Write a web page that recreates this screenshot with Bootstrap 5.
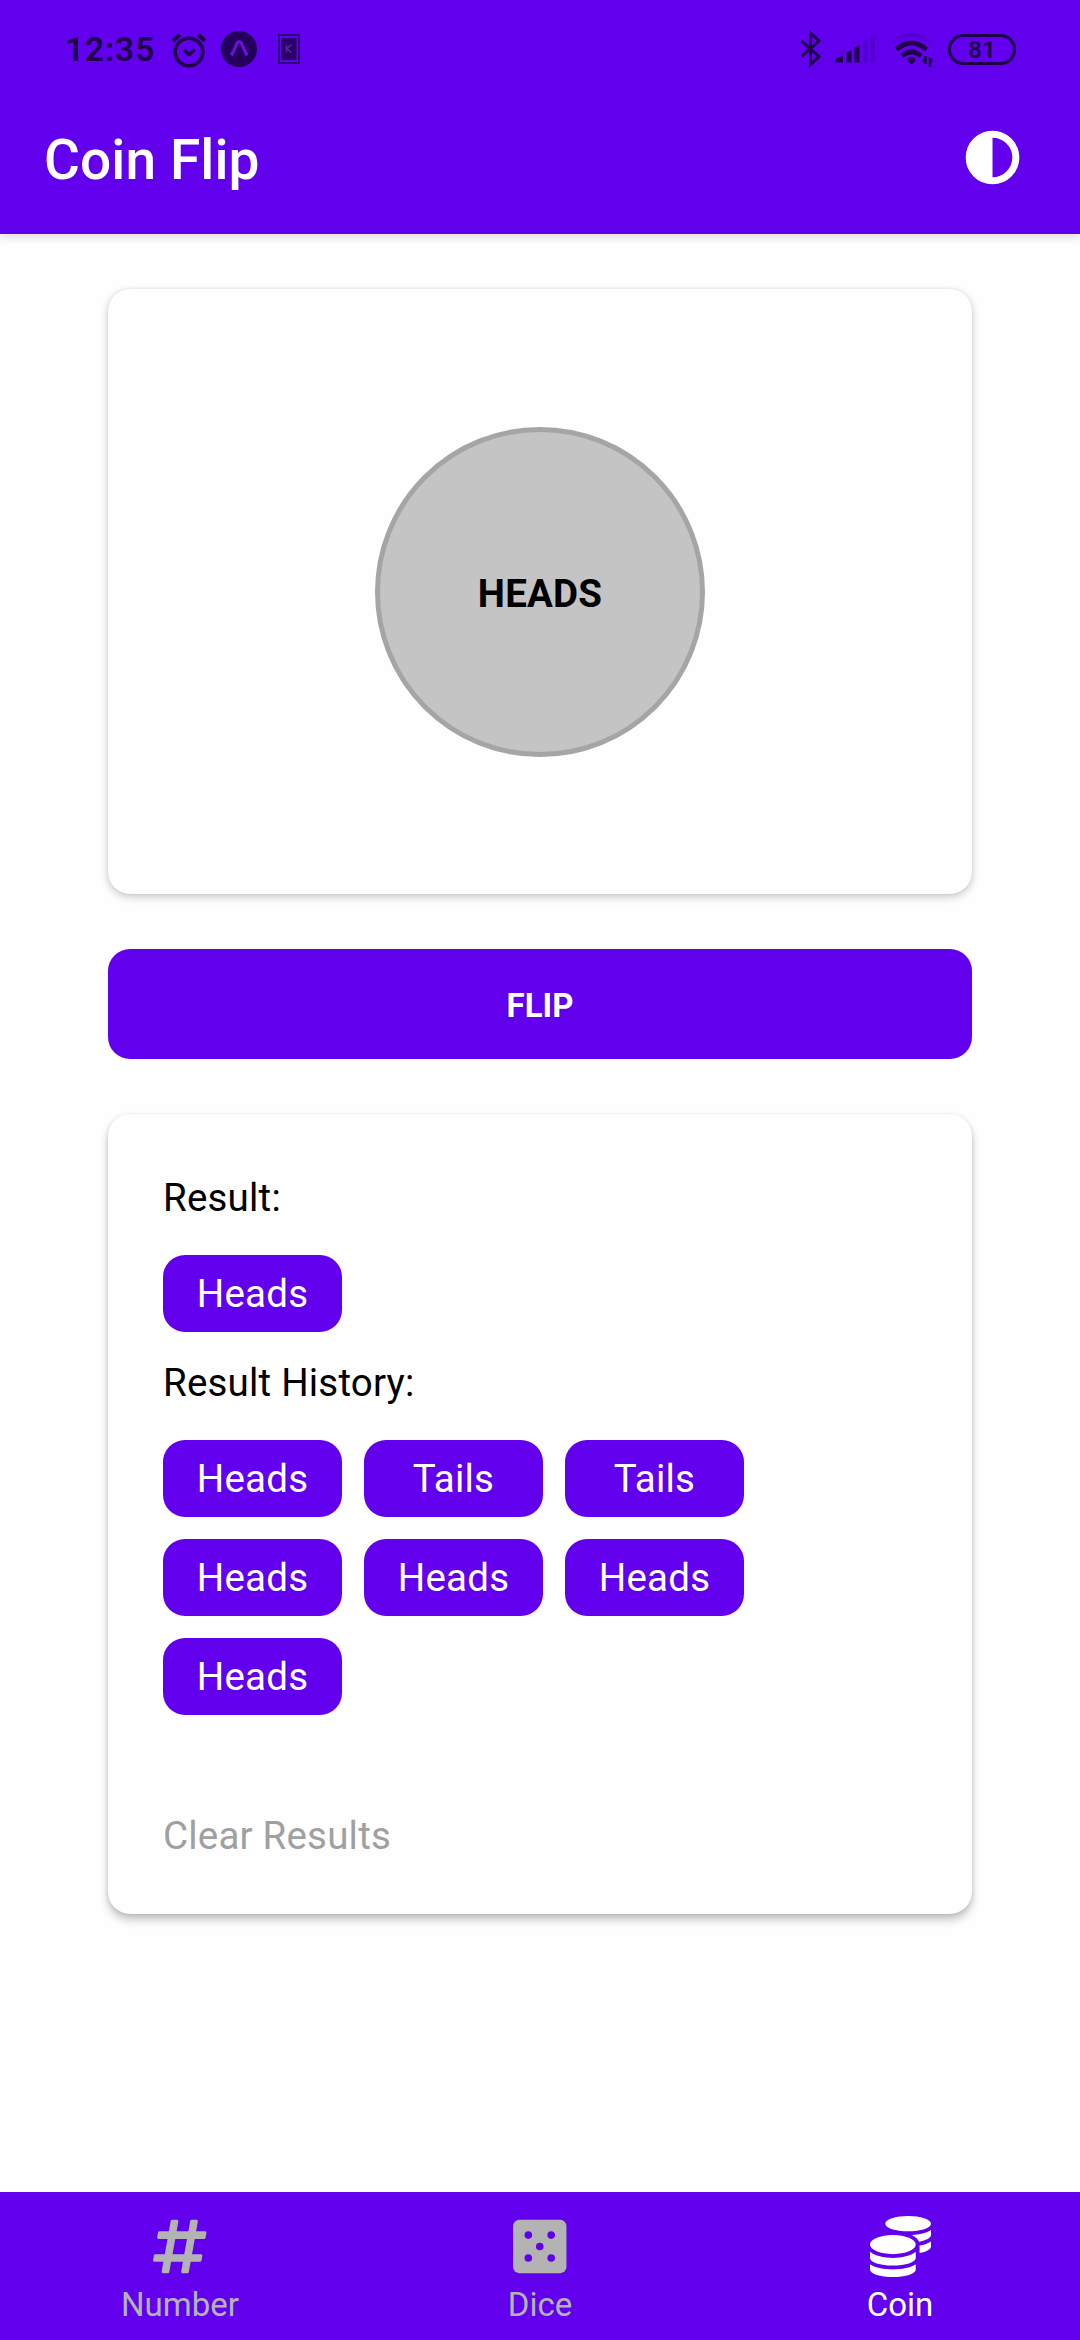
<!DOCTYPE html>
<html lang="en">
<head>
<meta charset="utf-8">
<meta name="viewport" content="width=device-width, initial-scale=1">
<title>Coin Flip</title>
<link href="https://cdn.jsdelivr.net/npm/bootstrap@5.3.0/dist/css/bootstrap.min.css" rel="stylesheet">
<style>
  :root { --brand: #6200ee; --ink: #1d0048; }
  body { font-family: Roboto, "Noto Sans", sans-serif; font-size: 38.5px; line-height: 52px; color: #000; background: #fefefe; }
  .screen { width: 1080px; height: 2340px; overflow: hidden; }
  svg { display: block; flex: none; }
  .bg-brand { background: var(--brand); }
  .app-header { height: 234px; box-shadow: 0 3px 9px rgba(0,0,0,.14); }
  .status-bar { height: 98px; padding: 0 64px 0 65px; color: var(--ink); }
  .clock { font-size: 33.5px; font-weight: 600; letter-spacing: .9px; line-height: 40px; width: 106px; padding-top: 2px; }
  .battery { width: 68px; height: 31px; border: 3px solid; border-radius: 16px; font-size: 24px; font-weight: 600; line-height: 25px; padding-top: 2px; }
  .title-bar { height: 123px; padding: 0 60px 0 44px; }
  .title-bar h1 { font-size: 55px; font-weight: 500; line-height: 64px; letter-spacing: .1px; }
  .content { width: 864px; padding-top: 55px; gap: 55px; }
  .panel { --bs-card-border-width: 0; --bs-card-border-radius: 22px; --bs-card-bg: #fefefe; box-shadow: 0 3px 9px rgba(0,0,0,.21), 0 0 3px rgba(0,0,0,.09); }
  .coin-panel { height: 605px; }
  .coin-face { width: 330px; height: 330px; border: 5.5px solid #a5a5a5; background: #c4c4c4; padding-top: 5px; letter-spacing: .2px; }
  .btn-flip { --bs-btn-color: #fff; --bs-btn-bg: var(--brand); --bs-btn-hover-bg: #5500cf; --bs-btn-hover-color: #fff; --bs-btn-border-width: 0; --bs-btn-border-radius: 22px; --bs-btn-font-size: 33px; --bs-btn-font-weight: 700; height: 110px; padding: 4px 0 0; }
  .results { height: 800px; padding: 58px 55px 52px; letter-spacing: .2px; box-shadow: 0 6px 10px rgba(0,0,0,.22), 0 1px 4px rgba(0,0,0,.12); }
  .chips { gap: 22px; margin-top: 31px; width: 600px; }
  .chip { width: 179px; height: 77px; border-radius: 22px; background: var(--brand); color: #fff; }
  .history { margin-top: 25px; }
  .clear { color: #a0a0a0; }
  .tabs { height: 148px; }
  .tabs .nav-link { color: #b3b3b3; padding: 24px 0 0; gap: 9px; font-size: 33px; line-height: 38px; }
  .tabs .nav-link.active { color: #fff; background: transparent; }
</style>
</head>
<body>
<div class="screen d-flex flex-column">
  <header class="app-header bg-brand flex-shrink-0">
    <div class="status-bar d-flex align-items-center">
      <span class="clock">12:35</span>
      <svg width="36" height="40" viewBox="0 0 36 40" fill="none" stroke="currentColor" stroke-width="3.500" stroke-linecap="round" stroke-linejoin="round"><circle cx="18" cy="23" r="13.8"/><path d="M2 12l7-6.500M34 12l-7-6.500" stroke-linecap="butt" stroke-width="4"/><path d="M13 21l5 4.500 6-5" stroke-linecap="butt"/></svg>
      <svg width="36" height="40" viewBox="0 0 36 40" style="margin-left:14px"><circle cx="18" cy="20" r="18" fill="#24005c"/><path d="M10.500 26.500L16.500 13.500Q18.300 11.500 20 13.500L26 26.500" fill="none" stroke="#6812d8" stroke-width="3.200"/></svg>
      <svg width="24" height="40" viewBox="0 0 24 40" style="margin-left:20px" fill="none" stroke="#2c0075"><path d="M2 6h20v28H2z" stroke-width="2"/><path d="M5.500 10h13v20h-13z" stroke-width="2" fill="#27005f"/><path d="M9.500 15.500v8M14.500 15.500l-4.500 4 4.500 4" stroke="#5a20a8" stroke-width="1.600"/></svg>
      <div class="d-flex align-items-center ms-auto">
        <svg width="22" height="40" viewBox="0 0 22 40" fill="none" stroke="currentColor" stroke-width="3"><path d="M1.500 12L19 27.500 10.500 35.500V4L19 12 1.500 27.500"/></svg>
        <svg width="44" height="40" viewBox="0 0 44 40" style="margin-left:12px" fill="currentColor"><path d="M1 33.500v-3l8-4v7zM12.500 23.500l5-2v12h-5zM20.500 18.500l5-2.500v17.500h-5z"/><path d="M29 12l4.500-2v23.500H29zM37 7l4-2v28.500h-4z" opacity=".2"/></svg>
        <svg width="43" height="40" viewBox="0 0 43 40" style="margin-left:13px" fill="none" stroke="currentColor" stroke-width="4.600"><path d="M1.500 14Q20.500-2 40 14" stroke-width="3.500" opacity=".18"/><path d="M5.500 20.500Q20.500 7.500 35.500 20.500M11 27Q20.500 18.500 30 27"/><path d="M16.500 32a4 4 0 0 1 8 0l-4 3.500z" fill="currentColor" stroke="none"/><path d="M34.500 27v8M39 29v9" stroke-width="2.500"/><path d="M31 32l4-5v7zM42 31L38 36V28z" fill="currentColor" stroke="none"/></svg>
        <span class="battery d-flex align-items-center justify-content-center" style="margin-left:14px">81</span>
      </div>
    </div>
    <div class="title-bar d-flex align-items-center justify-content-between text-white">
      <h1 class="mb-0">Coin Flip</h1>
      <svg width="55" height="60" viewBox="0 0 55 60"><circle cx="27.500" cy="27.500" r="23.300" fill="none" stroke="#fff" stroke-width="7"/><path d="M27.500 3v49a24.500 24.500 0 0 1 0-49z" fill="#fff"/></svg>
    </div>
  </header>

  <main class="content d-flex flex-column mx-auto flex-grow-1">
    <section class="card panel coin-panel align-items-center justify-content-center">
      <div class="coin-face rounded-circle d-flex align-items-center justify-content-center fw-bold">HEADS</div>
    </section>
    <button type="button" class="btn btn-flip w-100">FLIP</button>
    <section class="card panel results">
      <div>Result:</div>
      <div class="chips d-flex flex-wrap"><span class="chip d-flex align-items-center justify-content-center">Heads</span></div>
      <div class="history">Result History:</div>
      <div class="chips d-flex flex-wrap">
        <span class="chip d-flex align-items-center justify-content-center">Heads</span>
        <span class="chip d-flex align-items-center justify-content-center">Tails</span>
        <span class="chip d-flex align-items-center justify-content-center">Tails</span>
        <span class="chip d-flex align-items-center justify-content-center">Heads</span>
        <span class="chip d-flex align-items-center justify-content-center">Heads</span>
        <span class="chip d-flex align-items-center justify-content-center">Heads</span>
        <span class="chip d-flex align-items-center justify-content-center">Heads</span>
      </div>
      <a class="clear text-decoration-none mt-auto">Clear Results</a>
    </section>
  </main>

  <nav class="tabs d-flex bg-brand flex-shrink-0">
    <a class="nav-link col d-flex flex-column align-items-center">
      <svg width="53.500" height="61" viewBox="0 0 448 512" fill="currentColor"><path d="M440.667 182.109l7.143-40c1.313-7.355-4.342-14.109-11.813-14.109h-74.810l14.623-81.891C377.123 38.754 371.468 32 363.997 32h-40.632a12 12 0 0 0-11.813 9.891L296.175 128H197.540l14.623-81.891C213.477 38.754 207.822 32 200.350 32h-40.632a12 12 0 0 0-11.813 9.891L132.528 128H53.432a12 12 0 0 0-11.813 9.891l-7.143 40C33.163 185.246 38.818 192 46.289 192h74.810L98.242 320H19.146a12 12 0 0 0-11.813 9.891l-7.143 40C-1.123 377.246 4.532 384 12.003 384h74.810L72.190 465.891C70.877 473.246 76.532 480 84.003 480h40.632a12 12 0 0 0 11.813-9.891L151.826 384h98.634l-14.623 81.891C234.523 473.246 240.178 480 247.650 480h40.632a12 12 0 0 0 11.813-9.891L315.472 384h79.096a12 12 0 0 0 11.813-9.891l7.143-40c1.313-7.355-4.342-14.109-11.813-14.109h-74.810l22.857-128h79.096a12 12 0 0 0 11.813-9.891zM261.889 320h-98.634l22.857-128h98.634l-22.857 128z"/></svg>
      <span>Number</span>
    </a>
    <a class="nav-link col d-flex flex-column align-items-center">
      <svg width="53.500" height="61" viewBox="0 0 448 512"><rect y="32" width="448" height="448" rx="52" fill="currentColor"/><g fill="#6200ee"><circle cx="128" cy="160" r="32"/><circle cx="320" cy="160" r="32"/><circle cx="224" cy="256" r="32"/><circle cx="128" cy="352" r="32"/><circle cx="320" cy="352" r="32"/></g></svg>
      <span>Dice</span>
    </a>
    <a class="nav-link active col d-flex flex-column align-items-center">
      <svg width="61" height="61" viewBox="0 0 512 512" fill="currentColor"><path d="M0 405.300V448c0 35.300 86 64 192 64s192-28.700 192-64v-42.700C342.700 434.400 267.200 448 192 448S41.300 434.400 0 405.300zM320 128c106 0 192-28.700 192-64S426 0 320 0 128 28.700 128 64s86 64 192 64zM0 300.400V352c0 35.300 86 64 192 64s192-28.700 192-64v-51.600c-41.300 34-116.900 51.600-192 51.600S41.300 334.400 0 300.400zm416 11c57.300-11.100 96-31.700 96-55.400v-42.700c-23.200 16.400-57.300 27.600-96 34.500v63.600zM192 160C86 160 0 195.800 0 240s86 80 192 80 192-35.800 192-80-86-80-192-80zm219.300 56.300c60-10.800 100.700-32 100.700-56.300v-42.700c-35.500 25.100-96.500 38.600-160.700 41.800 29.500 14.300 51.200 33.500 60 57.200z"/></svg>
      <span>Coin</span>
    </a>
  </nav>
</div>
<script src="https://cdn.jsdelivr.net/npm/bootstrap@5.3.0/dist/js/bootstrap.bundle.min.js"></script>
</body>
</html>
